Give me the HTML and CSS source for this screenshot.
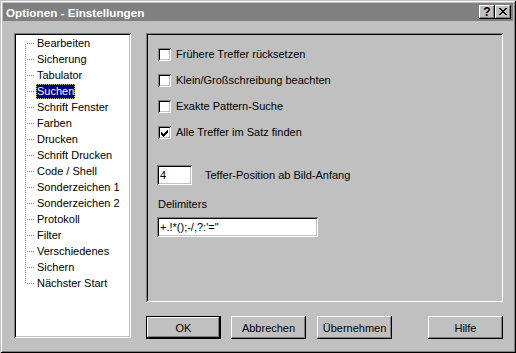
FILE: index.html
```html
<!DOCTYPE html>
<html lang="de">
<head>
    <meta charset="UTF-8">
    <title>Optionen - Einstellungen</title>
    <link rel="stylesheet" href="styles.css">
</head>
<body>
    <div class="window">
        <div class="titlebar">
            <span class="title">Optionen - Einstellungen</span>
            <span class="tbtn help">?</span>
            <span class="tbtn close">
                <svg width="8" height="7" viewBox="0 0 8 7" shape-rendering="crispEdges">
                    <path d="M0 0h2v1h-2zM6 0h2v1h-2zM1 1h2v1h-2zM5 1h2v1h-2zM2 2h4v1h-4zM3 3h2v1h-2zM2 4h4v1h-4zM1 5h2v1h-2zM5 5h2v1h-2zM0 6h2v1h-2zM6 6h2v1h-2z" fill="#000"/>
                </svg>
            </span>
        </div>

        <div class="content">
            <ul class="tree sunken">
                <li><span>Bearbeiten</span></li>
                <li><span>Sicherung</span></li>
                <li><span>Tabulator</span></li>
                <li class="selected"><span>Suchen</span></li>
                <li><span>Schrift Fenster</span></li>
                <li><span>Farben</span></li>
                <li><span>Drucken</span></li>
                <li><span>Schrift Drucken</span></li>
                <li><span>Code / Shell</span></li>
                <li><span>Sonderzeichen 1</span></li>
                <li><span>Sonderzeichen 2</span></li>
                <li><span>Protokoll</span></li>
                <li><span>Filter</span></li>
                <li><span>Verschiedenes</span></li>
                <li><span>Sichern</span></li>
                <li><span>Nächster Start</span></li>
            </ul>

            <div class="right">
                <div class="panel sunken">
                    <label class="check"><span class="box sunken"></span>Frühere Treffer rücksetzen</label>
                    <label class="check"><span class="box sunken"></span>Klein/Großschreibung beachten</label>
                    <label class="check"><span class="box sunken"></span>Exakte Pattern-Suche</label>
                    <label class="check">
                        <span class="box sunken">
                            <svg width="7" height="7" viewBox="0 0 7 7" shape-rendering="crispEdges">
                                <path d="M6 0h1v1h-1zM5 1h2v1h-2zM0 2h1v1h-1zM4 2h3v1h-3zM0 3h2v1h-2zM3 3h3v1h-3zM0 4h5v1h-5zM1 5h3v1h-3zM2 6h1v1h-1z" fill="#000"/>
                            </svg>
                        </span>Alle Treffer im Satz finden
                    </label>

                    <div class="pos-row">
                        <div class="field sunken small">4</div>
                        <span>Teffer-Position ab Bild-Anfang</span>
                    </div>

                    <div class="delim-label">Delimiters</div>
                    <div class="field sunken wide">+.!*();-/,?:'="</div>
                </div>

                <div class="buttons">
                    <button class="btn default">OK</button>
                    <button class="btn">Abbrechen</button>
                    <button class="btn apply">Übernehmen</button>
                    <button class="btn helpbtn">Hilfe</button>
                </div>
            </div>
        </div>
    </div>
</body>
</html>
```

FILE: styles.css
```css
* {
    box-sizing: border-box;
}
body {
    margin: 0;
    font-family: "Liberation Sans", Arial, sans-serif;
    font-size: 11px;
    color: #000;
    background: #c0c0c0;
}

/* Fenster */
.window {
    width: 516px;
    height: 353px;
    padding: 3px;
    background: #c0c0c0;
    box-shadow: inset 1px 1px #c0c0c0, inset -1px -1px #000, inset 2px 2px #fff, inset -2px -2px #808080;
}
.titlebar {
    height: 18px;
    background: #808080;
    display: flex;
    align-items: center;
    padding: 0 2px 0 3px;
}
.title {
    flex: 1;
    color: #fff;
    font-weight: bold;
    font-size: 11.7px;
}
.tbtn {
    width: 16px;
    height: 14px;
    background: #c0c0c0;
    box-shadow: inset -1px -1px #000, inset 1px 1px #fff, inset -2px -2px #808080;
    display: flex;
    align-items: center;
    justify-content: center;
}
.tbtn.help {
    font-weight: bold;
    font-size: 12px;
    line-height: 14px;
    padding-bottom: 1px;
}
.tbtn.close svg {
    margin: 0 1px 1px 0;
}

.content {
    display: flex;
    padding: 12px 0 0 11px;
}

/* vertiefter Rahmen */
.sunken {
    box-shadow: inset 1px 1px #808080, inset -1px -1px #fff, inset 2px 2px #000, inset -2px -2px #c0c0c0;
}

/* Baum links */
.tree {
    list-style: none;
    margin: 0;
    padding: 3px 2px 2px;
    width: 117px;
    height: 305px;
    background: #fff;
}
.tree li {
    height: 16px;
    line-height: 15px;
    padding-left: 20px;
    white-space: nowrap;
    background-image:
        repeating-linear-gradient(to right, #808080 0 1px, transparent 1px 2px),
        repeating-linear-gradient(to bottom, #808080 0 1px, transparent 1px 2px);
    background-size: 8px 1px, 1px 16px;
    background-position: 11px 7px, 9px 0;
    background-repeat: no-repeat;
}
.tree li:first-child {
    background-size: 8px 1px, 1px 8px;
    background-position: 11px 7px, 9px 8px;
}
.tree li:last-child {
    background-size: 8px 1px, 1px 8px;
}
.tree li span {
    display: inline-block;
    padding: 0 1px;
}
.tree li.selected span {
    background: #000080;
    color: #fff;
    outline: 1px dotted #c0c080;
    outline-offset: -1px;
}

/* rechte Seite */
.right {
    margin-left: 15px;
    width: 357px;
}
.panel {
    height: 269px;
    padding: 15px 0 0 12px;
}
.check {
    display: flex;
    align-items: center;
    height: 13px;
    margin-bottom: 13px;
    line-height: 13px;
}
.box {
    width: 13px;
    height: 13px;
    margin-right: 5px;
    background: #fff;
    display: flex;
    align-items: center;
    justify-content: center;
}
.box svg {
    margin-top: 1px;
}
.pos-row {
    display: flex;
    align-items: center;
    margin: 26px 0 0 -1px;
}
.field {
    height: 20px;
    background: #fff;
    padding: 3px 3px 0;
    line-height: 14px;
}
.field.small {
    width: 35px;
    margin-right: 13px;
}
.field.wide {
    width: 161px;
    margin-left: -1px;
}
.delim-label {
    margin: 13px 0 6px;
    line-height: 13px;
}

/* Knöpfe */
.buttons {
    display: flex;
    margin-top: 14px;
}
.btn {
    width: 75px;
    height: 23px;
    margin-right: 10px;
    border: none;
    background: #c0c0c0;
    font-family: inherit;
    font-size: 11px;
    color: #000;
    padding: 0;
    box-shadow: inset -1px -1px #000, inset 1px 1px #fff, inset -2px -2px #808080;
}
.btn.default {
    box-shadow: inset 0 0 0 1px #000, inset -2px -2px #000, inset 2px 2px #fff, inset -3px -3px #808080;
}
.btn.apply {
    margin-left: 1px;
}
.btn.helpbtn {
    margin: 0 0 0 auto;
}
```
